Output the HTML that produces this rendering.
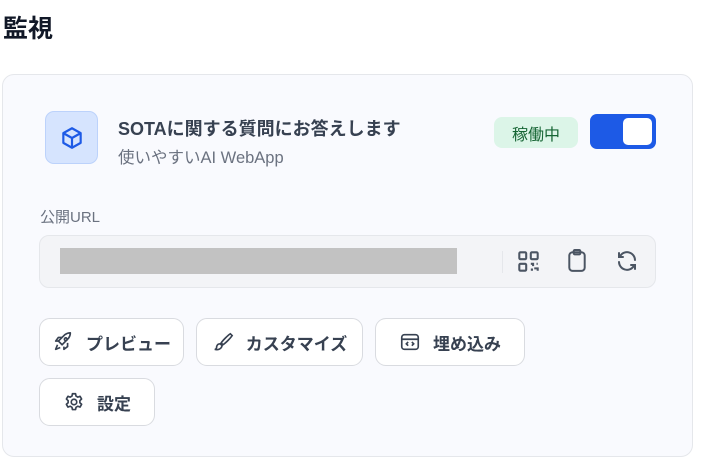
<!DOCTYPE html>
<html><head><meta charset="utf-8"><style>
*{box-sizing:border-box;margin:0;padding:0}
body{width:704px;height:468px;background:#fff;font-family:"Liberation Sans","Noto Sans CJK JP",sans-serif;position:relative;overflow:hidden;color:#374151}
.a{position:absolute}
h1{position:absolute;left:3px;top:9px;font-size:25px;font-weight:700;color:#111827}
.card{left:2px;top:74px;width:691px;height:383px;border:1px solid #e5e7eb;border-radius:12px;background:#f9fafe}
.btn{position:absolute;height:48px;border:1px solid #d9dbe0;border-radius:11px;background:#fff;display:flex;align-items:center;justify-content:center;gap:12px;font-size:17px;font-weight:700;color:#374151}
svg{display:block;flex-shrink:0}
</style></head><body>
<h1>監視</h1>
<div class="a card"></div>
<div class="a" style="left:45px;top:111px;width:53px;height:53px;border-radius:9px;background:#d6e4fe;border:1px solid #bcd2fb;display:flex;align-items:center;justify-content:center">
<svg width="26" height="26" viewBox="0 0 24 24" fill="none" stroke="#1d5ae6" stroke-width="2" stroke-linejoin="round"><path d="M12 3l8 4.5v9L12 21l-8-4.5v-9z"/><path d="M4 7.5l8 4.5 8-4.5M12 12v9"/></svg></div>
<div class="a" style="left:118px;top:115px;font-size:18px;font-weight:700;color:#374151">SOTAに関する質問にお答えします</div>
<div class="a" style="left:118px;top:144px;font-size:16.5px;color:#6b7280">使いやすいAI WebApp</div>
<div class="a" style="left:494px;top:117px;width:84px;height:31px;border-radius:8px;background:#dcf5e8;color:#166534;font-size:16px;display:flex;align-items:center;justify-content:center">稼働中</div>
<div class="a" style="left:590px;top:114px;width:66px;height:35px;border-radius:7px;background:#1d5ae6"><div class="a" style="right:4px;top:4px;width:29px;height:27px;border-radius:5px;background:#fff"></div></div>
<div class="a" style="left:40px;top:206px;font-size:15px;color:#6b7280">公開URL</div>
<div class="a" style="left:39px;top:235px;width:617px;height:53px;border-radius:10px;background:#f3f4f7;border:1px solid #e5e7eb"></div>
<div class="a" style="left:60px;top:248px;width:397px;height:26px;background:#c2c2c2"></div>
<div class="a" style="left:502px;top:251px;width:1px;height:22px;background:#e5e7eb"></div>
<svg class="a" style="left:517px;top:250px" width="23" height="23" viewBox="0 0 20 20" fill="none" stroke="#4b5563" stroke-width="1.8"><rect x="2" y="2" width="6" height="6" rx="1"/><rect x="12" y="2" width="6" height="6" rx="1"/><rect x="2" y="12" width="6" height="6" rx="1"/><path d="M12 12h2v2M17 12h1M12 17h1v1M15 16h3v2"/></svg>
<svg class="a" style="left:566px;top:248px" width="22" height="26" viewBox="0 0 20 22" fill="none" stroke="#4b5563" stroke-width="1.8"><rect x="3" y="3" width="14" height="17" rx="3"/><rect x="7" y="1" width="6" height="4" rx="1"/></svg>
<svg class="a" style="left:615px;top:249px" width="24" height="24" viewBox="0 0 24 24" fill="none" stroke="#4b5563" stroke-width="2" stroke-linecap="round"><path d="M20 11a8 8 0 0 0-14.5-4.5M4 4v4h4M4 13a8 8 0 0 0 14.5 4.5M20 20v-4h-4"/></svg>
<div class="btn" style="left:39px;top:318px;width:145px"><svg width="22" height="22" viewBox="0 0 24 24" fill="none" stroke="#374151" stroke-width="1.8" stroke-linejoin="round"><path d="M14 4c3-2 6-2 6-2s0 3-2 6l-7 7-4-4z"/><path d="M7 11H4l3-4h4M13 17v3l4-3v-4"/><circle cx="15" cy="9" r="1.5"/><path d="M6 15l-2 5 5-2"/></svg>プレビュー</div>
<div class="btn" style="left:196px;top:318px;width:167px"><svg width="22" height="22" viewBox="0 0 24 24" fill="none" stroke="#374151" stroke-width="1.8" stroke-linecap="round"><path d="M20 3c-3 2-8 7-10 10l2 2c3-2 8-7 10-10z"/><path d="M9 14c-3 0-4 2-4 4 0 1-1 2-2 2 3 1 7 0 8-4z"/></svg>カスタマイズ</div>
<div class="btn" style="left:375px;top:318px;width:150px"><svg width="22" height="22" viewBox="0 0 24 24" fill="none" stroke="#374151" stroke-width="1.8"><rect x="3" y="4" width="18" height="16" rx="3"/><path d="M3 9h18M10 12l-2 2 2 2M14 12l2 2-2 2"/></svg>埋め込み</div>
<div class="btn" style="left:39px;top:378px;width:116px"><svg width="22" height="22" viewBox="0 0 24 24" fill="none" stroke="#374151" stroke-width="1.8"><circle cx="12" cy="12" r="3"/><path d="M10.3 3h3.4l.5 2.5 2 1.2 2.4-.9 1.7 3-1.9 1.7v2.3l1.9 1.7-1.7 3-2.4-.9-2 1.2-.5 2.5h-3.4l-.5-2.5-2-1.2-2.4.9-1.7-3 1.9-1.7v-2.3L3.7 8.8l1.7-3 2.4.9 2-1.2z" stroke-linejoin="round"/></svg>設定</div>
</body></html>
